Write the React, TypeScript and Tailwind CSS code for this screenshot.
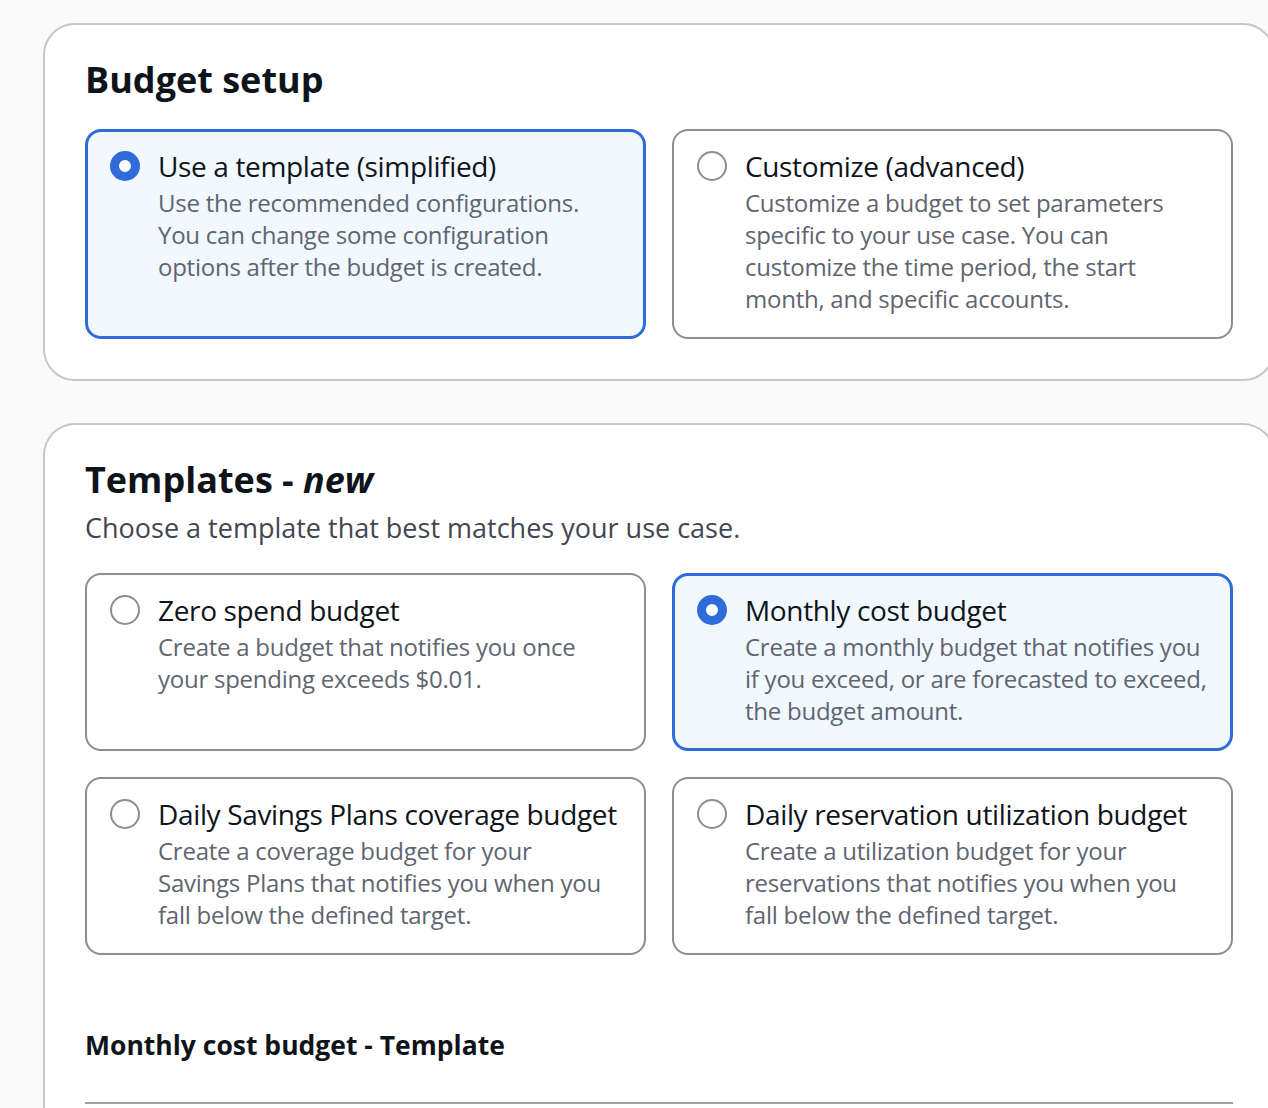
import { useState } from 'react';

type Option = { id: string; title: string; description: string };

const setupOptions: Option[] = [
  {
    id: 'template',
    title: 'Use a template (simplified)',
    description:
      'Use the recommended configurations. You can change some configuration options after the budget is created.',
  },
  {
    id: 'custom',
    title: 'Customize (advanced)',
    description:
      'Customize a budget to set parameters specific to your use case. You can customize the time period, the start month, and specific accounts.',
  },
];

const templateOptions: Option[] = [
  {
    id: 'zero',
    title: 'Zero spend budget',
    description: 'Create a budget that notifies you once your spending exceeds $0.01.',
  },
  {
    id: 'monthly',
    title: 'Monthly cost budget',
    description:
      'Create a monthly budget that notifies you if you exceed, or are forecasted to exceed, the budget amount.',
  },
  {
    id: 'savings',
    title: 'Daily Savings Plans coverage budget',
    description:
      'Create a coverage budget for your Savings Plans that notifies you when you fall below the defined target.',
  },
  {
    id: 'reservation',
    title: 'Daily reservation utilization budget',
    description:
      'Create a utilization budget for your reservations that notifies you when you fall below the defined target.',
  },
];

function Tile({ option, checked, onSelect }: { option: Option; checked: boolean; onSelect: () => void }) {
  return (
    <button
      type="button"
      onClick={onSelect}
      className={`flex items-start gap-[18px] rounded-[16px] text-left ${
        checked
          ? 'border-[3px] border-[#2f6bd9] bg-[#f1f8fe] pl-[22px] pr-[20px] pt-[16px] pb-[21px]'
          : 'border-2 border-[#8c8c94] bg-white pl-[23px] pr-[28px] pt-[17px] pb-[22px]'
      }`}
    >
      {checked ? (
        <span className="mt-[3px] block h-[30px] w-[30px] shrink-0 rounded-full border-[9px] border-[#2f6bd9] bg-white" />
      ) : (
        <span className="mt-[3px] block h-[30px] w-[30px] shrink-0 rounded-full border-2 border-[#8c8c94] bg-white" />
      )}
      <span className="flex min-w-0 flex-col">
        <span className="whitespace-nowrap text-[28px] leading-[36px] tracking-[-0.35px] text-[#0f141a]">
          {option.title}
        </span>
        <span className="mt-[3px] text-[24px] leading-[32px] tracking-[-0.25px] text-[#5f6570]">
          {option.description}
        </span>
      </span>
    </button>
  );
}

export default function App() {
  const [setup, setSetup] = useState('template');
  const [template, setTemplate] = useState('monthly');

  return (
    <div
      className="min-h-screen w-[1268px] overflow-hidden bg-[#fafafa] pl-[43px] pt-[23px]"
      style={{ fontFamily: '"Open Sans", "Noto Sans", sans-serif' }}
    >
      <div className="flex w-[1232px] flex-col gap-[42px]">
        <section className="rounded-[32px] border-2 border-[#c6c6cd] bg-white px-[40px] pt-[33px] pb-[40px]">
          <h2 className="text-[36px] font-bold leading-[44px] text-[#0f141a]">Budget setup</h2>
          <div className="mt-[27px] grid grid-cols-2 gap-[26px]">
            {setupOptions.map((o) => (
              <Tile key={o.id} option={o} checked={setup === o.id} onSelect={() => setSetup(o.id)} />
            ))}
          </div>
        </section>

        <section className="rounded-t-[32px] border-2 border-b-0 border-[#c6c6cd] bg-white px-[40px] pt-[33px] pb-[40px]">
          <h2 className="text-[36px] font-bold leading-[44px] text-[#0f141a]">
            Templates - <span className="italic">new</span>
          </h2>
          <p className="mt-[10px] text-[27px] leading-[32px] text-[#424650]">
            Choose a template that best matches your use case.
          </p>
          <div className="mt-[29px] grid grid-cols-2 gap-[26px]">
            {templateOptions.map((o) => (
              <Tile key={o.id} option={o} checked={template === o.id} onSelect={() => setTemplate(o.id)} />
            ))}
          </div>
          <h3 className="mt-[74px] text-[26.5px] font-bold leading-[32px] text-[#0f141a]">
            Monthly cost budget - Template
          </h3>
          <div className="mt-[41px] h-[40px] border-t-2 border-[#9ba1a6] bg-white" />
        </section>
      </div>
    </div>
  );
}
